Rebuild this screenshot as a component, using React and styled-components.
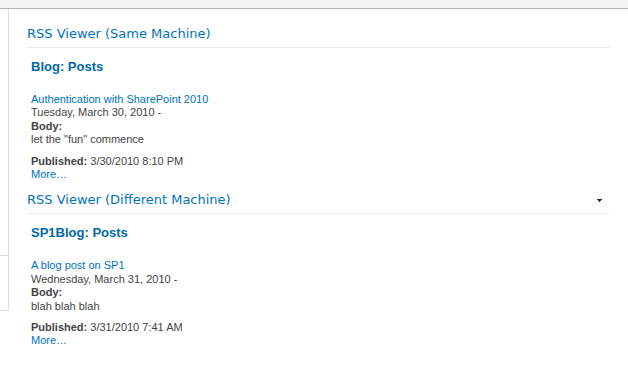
import styled, { createGlobalStyle } from 'styled-components'

const GlobalStyle = createGlobalStyle`
  html, body {
    margin: 0;
    padding: 0;
    background: #ffffff;
  }
`

const feeds = [
  {
    title: 'RSS Viewer (Same Machine)',
    menu: false,
    channel: 'Blog: Posts',
    post: 'Authentication with SharePoint 2010',
    date: 'Tuesday, March 30, 2010 -',
    body: 'let the "fun" commence',
    published: '3/30/2010 8:10 PM',
  },
  {
    title: 'RSS Viewer (Different Machine)',
    menu: true,
    channel: 'SP1Blog: Posts',
    post: 'A blog post on SP1',
    date: 'Wednesday, March 31, 2010 -',
    body: 'blah blah blah',
    published: '3/31/2010 7:41 AM',
  },
]

export default function App() {
  return (
    <Page>
      <GlobalStyle />
      <TopBar />
      <Main>
        <LeftNav>
          <NavSection />
        </LeftNav>
        <Content>
          {feeds.map((feed) => (
            <WebPart key={feed.title}>
              <WebPartHeader>
                <WebPartTitle>{feed.title}</WebPartTitle>
                {feed.menu && (
                  <MenuArrow width="5" height="3" viewBox="0 0 5 3">
                    <path d="M0 0h5v1H4v1H3v1H2V2H1V1H0z" fill="#12314f" />
                  </MenuArrow>
                )}
              </WebPartHeader>
              <Feed>
                <Channel>{feed.channel}</Channel>
                <Item>
                  <ItemLink>{feed.post}</ItemLink>
                  <Line>{feed.date}</Line>
                  <Line>
                    <b>Body:</b>
                  </Line>
                  <Line>{feed.body}</Line>
                  <Published>
                    <b>Published:</b> {feed.published}
                  </Published>
                  <ItemLink>More…</ItemLink>
                </Item>
              </Feed>
            </WebPart>
          ))}
        </Content>
      </Main>
    </Page>
  )
}

const Page = styled.div`
  width: 628px;
  height: 365px;
  overflow: hidden;
  background: #ffffff;
`

const TopBar = styled.div`
  height: 8px;
  background: #f5f5f5;
  border-bottom: 1px solid #b2b2b2;
`

const Main = styled.div`
  display: flex;
  align-items: flex-start;
`

const LeftNav = styled.nav`
  width: 8px;
  height: 301px;
  flex-shrink: 0;
  border-right: 1px solid #dcdcdc;
  border-bottom: 1px solid #dcdcdc;
`

const NavSection = styled.div`
  height: 246px;
  border-bottom: 1px solid #dcdcdc;
`

const Content = styled.main`
  width: 583px;
  padding: 6px 0 0 18px;
`

const WebPart = styled.section`
  padding-top: 11px;
`

const WebPartHeader = styled.div`
  display: flex;
  align-items: center;
  justify-content: space-between;
  padding-bottom: 5px;
  border-bottom: 1px solid #ebebeb;
`

const WebPartTitle = styled.h2`
  margin: 0;
  font-family: 'DejaVu Sans', Verdana, sans-serif;
  font-size: 13px;
  font-weight: normal;
  line-height: 16px;
  color: #0072bc;
`

const MenuArrow = styled.svg`
  display: block;
  margin-right: 8px;
`

const Feed = styled.div`
  padding: 11px 0 0 4px;
  font-family: 'Liberation Sans', Arial, sans-serif;
  font-size: 11px;
  line-height: 13.4px;
  color: #444444;
`

const Channel = styled.h3`
  margin: 0;
  font-size: 13px;
  font-weight: bold;
  line-height: 16px;
  color: #0068a8;
`

const Item = styled.div`
  padding-top: 18px;
`

const ItemLink = styled.a`
  display: block;
  color: #0072bc;
  cursor: pointer;
`

const Line = styled.div`
  b {
    font-weight: bold;
  }
`

const Published = styled(Line)`
  margin-top: 8px;
`
